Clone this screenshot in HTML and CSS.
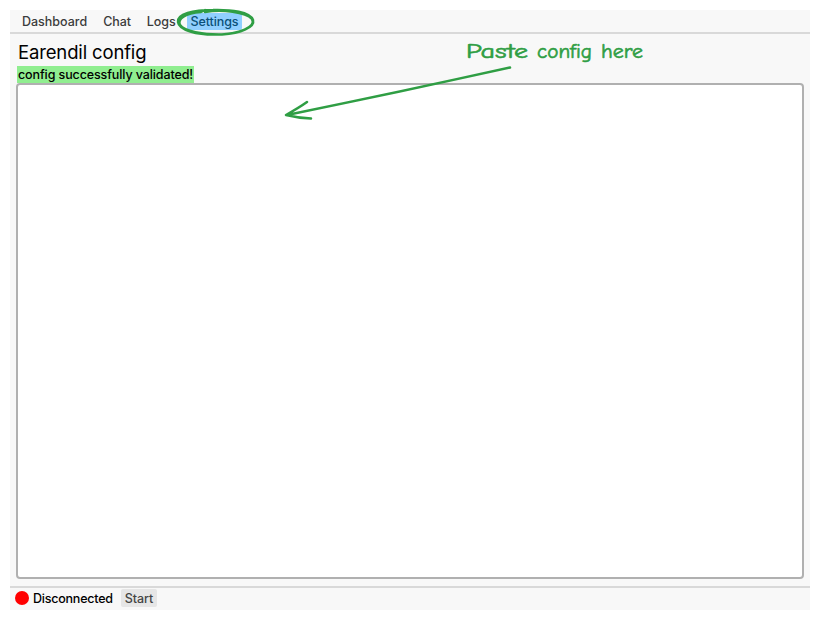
FILE: index.html
```html
<!DOCTYPE html>
<html lang="en">
<head>
<meta charset="utf-8">
<title>Earendil</title>
<link rel="stylesheet" href="styles.css">
</head>
<body>
<div class="app">
  <nav class="tabs">
    <span class="tab">Dashboard</span>
    <span class="tab">Chat</span>
    <span class="tab">Logs</span>
    <span class="tab active">Settings</span>
  </nav>
  <main class="content">
    <h1 class="title">Earendil config</h1>
    <div class="status">config successfully validated!</div>
    <div class="editor"></div>
  </main>
  <footer class="footer">
    <span class="dot"></span>
    <span class="state">Disconnected</span>
    <span class="start">Start</span>
  </footer>
</div>
<svg class="notes" width="820" height="620" viewBox="0 0 820 620">
  <g class="stroke">
    <path d="M205 12C222 9 246 12 252 19C257 27 239 34 217 34.500C197 35 179 30 178 22C177 14 193 10 213 10C231 9.500 250 12 253 20C255 27 241 33 222 34.500C203 35 184 31 180 25C177 19 185 13 201 12L205 10"/>
    <path d="M510 67.500Q400 92 287 115M307 102Q300 107 286 115Q298 118 311 118.500"/>
  </g>
  <g class="hand">
    <text x="466" y="58" textLength="62" lengthAdjust="spacingAndGlyphs">Paste</text>
    <text x="537" y="58" textLength="55" lengthAdjust="spacingAndGlyphs">config</text>
    <text x="601" y="58" textLength="42" lengthAdjust="spacingAndGlyphs">here</text>
  </g>
</svg>
</body>
</html>
```
FILE: styles.css
```css
* { box-sizing: border-box; }
body {
  margin: 0;
  padding: 10px;
  background: #fff;
  color: #000;
  font: 500 12.5px/16px Inter, sans-serif;
}
.app {
  display: flex;
  flex-direction: column;
  height: 600px;
  background: #f8f8f8;
}
.tabs {
  display: flex;
  gap: 8px;
  height: 24px;
  padding: 3px 8px 0;
  border-bottom: 2px solid #d9d9d9;
  color: #3c3c3c;
  letter-spacing: -0.1px;
}
.tab {
  height: 17px;
  padding: 1px 4px 0;
  border-radius: 2px;
}
.tab:first-child { letter-spacing: 0; }
.active {
  margin-left: -1px;
  background: #90cfff;
  color: #0a5078;
}
.content {
  flex: 1;
  display: flex;
  flex-direction: column;
  align-items: flex-start;
  padding: 6px 6px 7px;
}
.title {
  margin: 0 2px 1px;
  font-size: 18.5px;
  font-weight: 400;
  line-height: 25px;
  letter-spacing: -0.15px;
}
.status {
  height: 17px;
  margin-left: 1px;
  padding: 1px 1px 0;
  background: #90ee90;
  letter-spacing: -0.11px;
}
.editor {
  flex: 1;
  align-self: stretch;
  border: 2px solid #b0b0b0;
  border-radius: 4px;
  background: #fff;
}
.footer {
  display: flex;
  align-items: flex-start;
  height: 24px;
  padding: 2px 4.5px 0;
  border-top: 2px solid #d9d9d9;
  letter-spacing: -0.22px;
}
.dot {
  width: 14px;
  height: 14px;
  margin: 1px 4.5px 0 0;
  border-radius: 50%;
  background: #f00;
}
.state { padding-top: 1px; }
.start {
  height: 18px;
  margin: -1px 0 0 8px;
  padding: 2px 4px 0;
  border-radius: 2px;
  background: #e6e6e6;
  color: #444;
  letter-spacing: -0.1px;
}
.notes { position: absolute; left: 0; top: 0; pointer-events: none; }
.stroke {
  fill: none;
  stroke: #2f9e44;
  stroke-width: 2.5;
  stroke-linecap: round;
  stroke-linejoin: round;
}
.hand {
  fill: #2f9e44;
  stroke: #2f9e44;
  stroke-width: 0.6;
  font: 500 20px Virgil, "Comic Neue", "Comic Sans MS", "Open Sans", cursive;
}
```
